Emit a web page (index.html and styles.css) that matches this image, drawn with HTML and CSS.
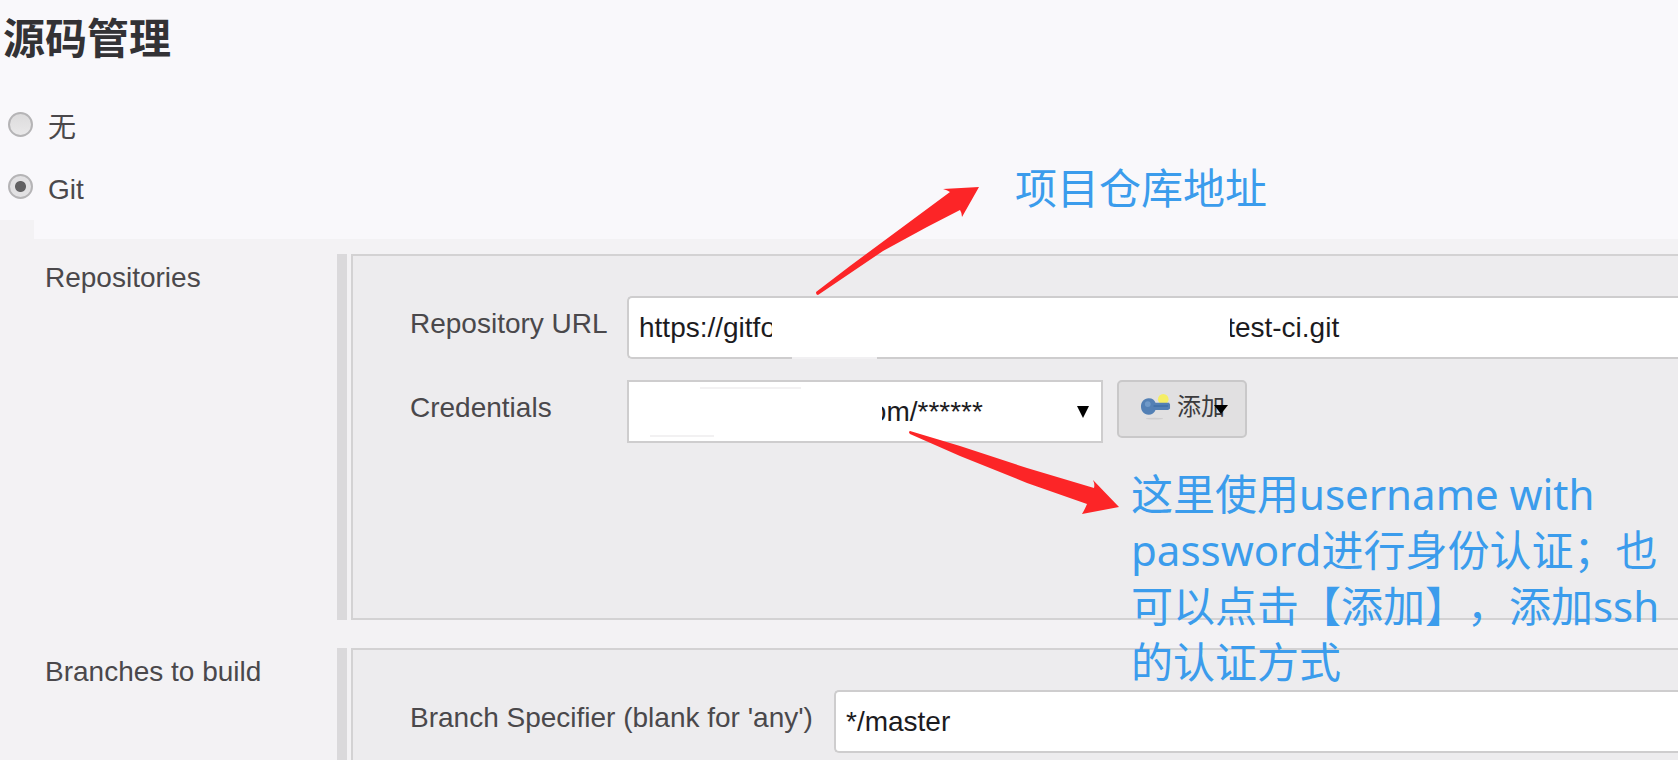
FILE: index.html
```html
<!DOCTYPE html>
<html lang="zh-CN">
<head>
<meta charset="utf-8">
<title>源码管理</title>
<link rel="stylesheet" href="styles.css">
</head>
<body>
<main class="page">
  <header class="source">
    <h1 class="title">源码管理</h1>
    <label class="choice"><input class="radio" type="radio" name="scm"><span class="choice-text">无</span></label>
    <label class="choice"><input class="radio" type="radio" name="scm" checked><span class="choice-text">Git</span></label>
  </header>

  <section class="settings">
    <div class="row">
      <h2 class="row-name">Repositories</h2>
      <div class="bar">
        <div class="panel">
          <div class="field">
            <label class="field-name" for="url">Repository URL</label>
            <div class="control">
              <input class="text-box" id="url" type="text" value="https://gitfo                                                          test-ci.git">
              <span class="mask mask-url"></span>
            </div>
          </div>
          <div class="field">
            <label class="field-name" for="cred">Credentials</label>
            <div class="control control-select">
              <select class="select-box" id="cred"><option>&nbsp;&nbsp;&nbsp;&nbsp;&nbsp;&nbsp;&nbsp;&nbsp;&nbsp;&nbsp;&nbsp;&nbsp;&nbsp;&nbsp;&nbsp;&nbsp;&nbsp;&nbsp;&nbsp;&nbsp;&nbsp;&nbsp;&nbsp;&nbsp;&nbsp;&nbsp;&nbsp;&nbsp;com/******</option></select>
              <span class="mask mask-cred"></span>
              <svg class="select-arrow" viewBox="0 0 12 12"><path d="M0 0H12L6 12Z"/></svg>
            </div>
            <button class="add" type="button">
              <svg class="key" viewBox="0 0 32 30">
                <ellipse cx="15" cy="27" rx="9" ry="1" fill="#cfcdcf"/>
                <circle cx="24" cy="7" r="5.500" fill="#f5ee66"/>
                <path d="M9 6c4 0 6 2 7 4.500H30l1 2v4l-2 1.500H16c-1 3-4 5-7 5-5 0-8-4-8-8.500S4 6 9 6z" fill="#5380b5"/>
                <path d="M14 14h15" stroke="#3f6ea6" stroke-width="1.500"/>
                <circle cx="8" cy="12" r="3" fill="#6f99c8"/>
              </svg>
              <span>添加</span>
              <svg class="menu-arrow" viewBox="0 0 14 9"><path d="M0 0H14L7 9Z"/></svg>
            </button>
          </div>
        </div>
      </div>
    </div>

    <div class="row row-last">
      <h2 class="row-name">Branches to build</h2>
      <div class="bar">
        <div class="panel panel-open">
          <div class="field">
            <label class="field-name field-name-wide" for="branch">Branch Specifier (blank for 'any')</label>
            <div class="control">
              <input class="text-box" id="branch" type="text" value="*/master">
            </div>
          </div>
        </div>
      </div>
    </div>
  </section>

  <svg class="arrow arrow-url" viewBox="0 0 166 110"><path d="M0 106L34 80 84 43 134 6Q131 4 127 3L163 1 146 31Q146 27 144 24L111 41 67 65 2 109Q0 109 0 106Z"/></svg>
  <svg class="arrow arrow-cred" viewBox="0 0 212 86"><path d="M2 1L52 16 119 38 186 58Q187 54 185 50L211 77 174 84Q177 79 179 74L119 53 52 26 2 4Q0 2 2 1Z"/></svg>
  <p class="note note-url">项目仓库地址</p>
  <p class="note note-cred">这里使用username with<br>password进行身份认证；也<br>可以点击【添加】，添加ssh<br>的认证方式</p>
</main>
</body>
</html>
```

FILE: styles.css
```css
* {
  box-sizing: border-box;
}

body {
  margin: 0;
  background: #f9f8fb;
  color: #4a484b;
  font-family: "Liberation Sans", "Noto Sans CJK SC", sans-serif;
  font-size: 28px;
  line-height: 32px;
}

.page {
  position: relative;
  display: flex;
  flex-direction: column;
  min-height: 100vh;
  overflow: hidden;
}

.source {
  display: flex;
  flex-direction: column;
  padding: 10px 3px 21px;
}

.title {
  margin: 0 0 34px;
  color: #333235;
  font-size: 42px;
  line-height: 60px;
}

.choice {
  display: flex;
  align-items: flex-start;
  gap: 15px;
  height: 40px;
  padding-left: 5px;
}

.choice + .choice {
  margin-top: 22px;
  height: 52px;
}

.choice-text {
  padding-top: 8px;
}

.radio {
  appearance: none;
  width: 25px;
  height: 25px;
  margin: 8px 0 0;
  border: 2px solid #b5b4b6;
  border-radius: 50%;
  background: linear-gradient(#dcdbdc, #e9e8e9);
}

.radio:checked {
  background: radial-gradient(circle, #626163 0 5px, #e2e1e3 6px);
}

.settings {
  position: relative;
  display: flex;
  flex: 1;
  flex-direction: column;
  gap: 28px;
  padding-top: 15px;
  background: #f3f2f4;
}

.settings::before {
  content: "";
  position: absolute;
  left: 0;
  top: -19px;
  width: 34px;
  height: 19px;
  background: #f3f2f4;
}

.row {
  display: grid;
  grid-template-columns: 337px 1fr;
}

.row-last {
  flex: 1;
}

.row-name {
  margin: 0;
  padding: 8px 0 0 45px;
  font-size: 28px;
  font-weight: 400;
}

.bar {
  display: flex;
  padding-left: 4px;
  border-left: 10px solid #dad9db;
}

.panel {
  flex: 1;
  display: flex;
  flex-direction: column;
  gap: 21px;
  min-height: 366px;
  padding: 40px 0 0 57px;
  border: 2px solid #d3d2d3;
  border-right: 0;
  background: #edecee;
}

.panel-open {
  min-height: 0;
  border-bottom: 0;
}

.field {
  display: flex;
  align-items: flex-start;
}

.field-name {
  width: 217px;
  padding-top: 12px;
  white-space: nowrap;
}

.field-name-wide {
  width: 424px;
}

.control {
  position: relative;
  flex: 1;
}

.control-select {
  flex: none;
  width: 476px;
}

.text-box,
.select-box {
  display: block;
  width: 100%;
  height: 63px;
  margin: 0;
  padding: 0 10px;
  border: 2px solid #cecdce;
  background: #fff;
  color: #1c1b1e;
  font: inherit;
}

.text-box {
  border-right: 0;
  border-radius: 5px 0 0 5px;
}

.select-box {
  appearance: none;
}

.mask,
.mask::before,
.mask::after {
  position: absolute;
  background: #fff;
}

.mask-url {
  left: 145px;
  top: 4px;
  width: 458px;
  height: 54px;
}

.mask-url::before {
  content: "";
  left: 20px;
  top: 57px;
  width: 85px;
  height: 2px;
  background: #f1f0f2;
}

.mask-cred {
  left: 4px;
  top: 4px;
  width: 251px;
  height: 54px;
}

.mask-cred::before,
.mask-cred::after {
  content: "";
  height: 2px;
  background: #f2f1f2;
}

.mask-cred::before {
  left: 69px;
  top: 3px;
  width: 101px;
}

.mask-cred::after {
  left: 19px;
  top: 51px;
  width: 64px;
}

.select-arrow {
  position: absolute;
  left: 450px;
  top: 26px;
  width: 12px;
  height: 12px;
}

.add {
  position: relative;
  display: flex;
  align-items: center;
  gap: 6px;
  width: 130px;
  height: 58px;
  margin-left: 14px;
  padding: 0 0 4px 21px;
  border: 2px solid #c9c8c9;
  border-radius: 5px;
  background: #e1e0e1;
  color: #3c3b3d;
  font: inherit;
  font-size: 24px;
}

.key {
  width: 31px;
  height: 30px;
}

.menu-arrow {
  position: absolute;
  left: 95px;
  top: 23px;
  width: 14px;
  height: 9px;
}

.arrow {
  position: absolute;
  fill: #fc2527;
}

.arrow-url {
  left: 816px;
  top: 186px;
  width: 166px;
  height: 110px;
}

.arrow-cred {
  left: 908px;
  top: 430px;
  width: 212px;
  height: 86px;
}

.note {
  position: absolute;
  margin: 0;
  color: #3b9cec;
  font-family: "Noto Sans", "Noto Sans CJK SC", sans-serif;
  font-size: 42px;
  line-height: 56px;
  white-space: nowrap;
  text-spacing-trim: space-all;
}

.note-url {
  left: 1015px;
  top: 160px;
}

.note-cred {
  left: 1131px;
  top: 466px;
}
```
